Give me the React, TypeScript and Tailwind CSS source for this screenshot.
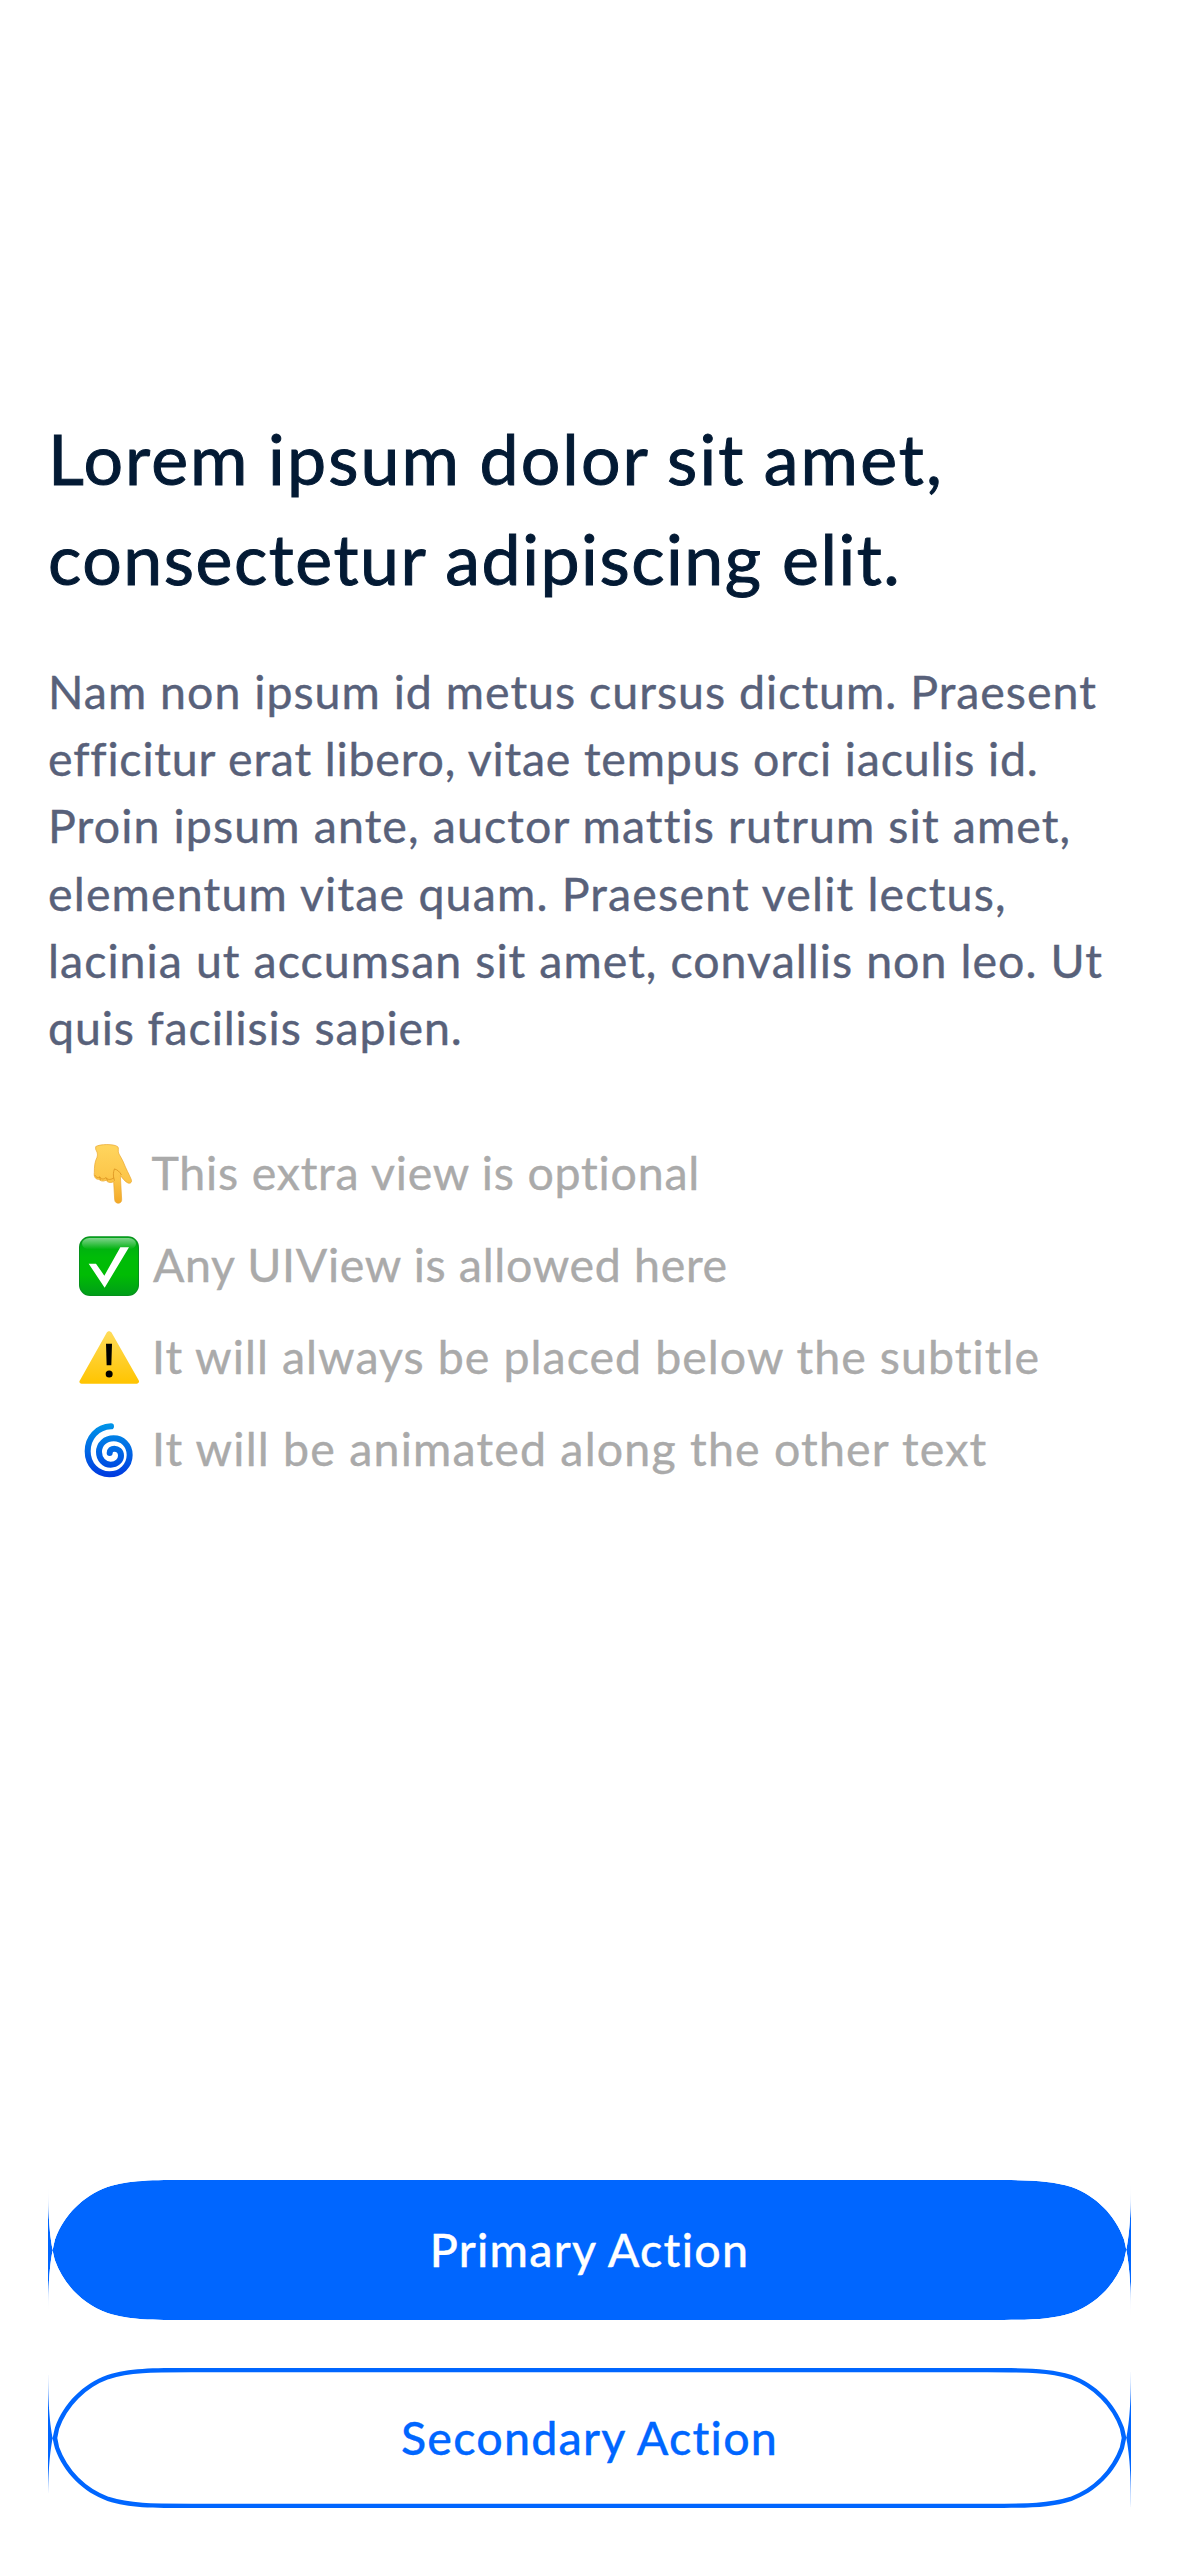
import React from 'react';

const titleLines = [
  { text: 'Lorem ipsum dolor sit amet,', cls: 'tracking-[2.1px] [word-spacing:-1.500px]' },
  { text: 'consectetur adipiscing elit.', cls: 'tracking-[1.54px]' },
];

const subtitleLines = [
  { text: 'Nam non ipsum id metus cursus dictum. Praesent', cls: 'tracking-[1px]' },
  { text: 'efficitur erat libero, vitae tempus orci iaculis id.', cls: 'tracking-[0.82px]' },
  { text: 'Proin ipsum ante, auctor mattis rutrum sit amet,', cls: 'tracking-[1.12px]' },
  { text: 'elementum vitae quam. Praesent velit lectus,', cls: 'tracking-[1.18px]' },
  { text: 'lacinia ut accumsan sit amet, convallis non leo. Ut', cls: 'tracking-[1.04px]' },
  { text: 'quis facilisis sapien.', cls: 'tracking-[0.88px]' },
];

function PointingHand() {
  return (
    <svg viewBox="57 71 180 180" className="size-[60px] shrink-0" role="img" aria-label="Pointing down">
      <defs>
        <linearGradient id="hand" x1="0" y1="0" x2="0" y2="1">
          <stop offset="0" stopColor="#FFD55E" />
          <stop offset="0.6" stopColor="#FCC548" />
          <stop offset="1" stopColor="#F3A827" />
        </linearGradient>
      </defs>
      <path
        d="M107 79 C118 71 162 70 173 79 C178 83 172 93 177 101 C181 110 187 116 190 125 C198 146 208 163 214 178 C217 187 209 191 202 187 C194 183 187 172 181 166 L185 237 C186 252 165 253 164 238 L161 184 C150 189 143 186 138 180 C128 185 120 181 117 177 C106 178 101 168 103 157 C103 139 104 124 111 111 C115 101 110 93 107 87 Z"
        fill="url(#hand)"
        stroke="#E9A52C"
        strokeWidth="2"
      />
      <path
        d="M105 165 C108 172 115 173 119 170 C123 178 132 177 138 172 C144 180 154 178 161 173 M139 173 L142 180 M119 170 L121 178 M163 180 C158 164 160 155 163 147 M164 146 C172 148 179 154 184 163"
        fill="none"
        stroke="#DC9420"
        strokeWidth="2.500"
        strokeLinecap="round"
      />
    </svg>
  );
}

function CheckBox() {
  return (
    <svg viewBox="57 347 180 180" className="size-[60px] shrink-0" role="img" aria-label="Check mark">
      <defs>
        <linearGradient id="box" x1="0" y1="0" x2="0" y2="1">
          <stop offset="0" stopColor="#00A818" />
          <stop offset="0.35" stopColor="#00BC08" />
          <stop offset="0.65" stopColor="#00BC04" />
          <stop offset="1" stopColor="#009E18" />
        </linearGradient>
        <linearGradient id="gloss" x1="0" y1="0" x2="0" y2="1">
          <stop offset="0" stopColor="#fff" stopOpacity="0.5" />
          <stop offset="1" stopColor="#fff" stopOpacity="0" />
        </linearGradient>
      </defs>
      <rect x="57" y="348" width="180" height="179" rx="33" fill="#06911C" />
      <rect x="60" y="351" width="174" height="173" rx="30" fill="url(#box)" />
      <rect x="66" y="353" width="162" height="34" rx="22" fill="url(#gloss)" />
      <path d="M86 430 H108 L133 466 L181 381 H207 L134 502 Z" fill="#fff" />
    </svg>
  );
}

function Warning() {
  return (
    <svg viewBox="57 623 180 180" className="size-[60px] shrink-0" role="img" aria-label="Warning">
      <defs>
        <linearGradient id="warn" x1="0" y1="0" x2="0" y2="1">
          <stop offset="0" stopColor="#FFDC5A" />
          <stop offset="1" stopColor="#FFC400" />
        </linearGradient>
      </defs>
      <path
        d="M140 637 C143 631 151 631 155 637 L236 780 C239 785 236 790 230 790 H65 C59 790 56 785 60 780 Z"
        fill="url(#warn)"
      />
      <path d="M138 670 H156 L154 735 H140 Z" fill="#000" />
      <circle cx="147.500" cy="761" r="10.500" fill="#000" />
    </svg>
  );
}

function Cyclone() {
  return (
    <svg viewBox="57 899 180 180" className="size-[60px] shrink-0" role="img" aria-label="Cyclone">
      <defs>
        <linearGradient id="cyc" gradientUnits="userSpaceOnUse" x1="0" y1="908" x2="0" y2="1072">
          <stop offset="0" stopColor="#0096E8" />
          <stop offset="0.5" stopColor="#0068E4" />
          <stop offset="1" stopColor="#0038E0" />
        </linearGradient>
      </defs>
      <path
        d="M153 918 C111 920 83 952 83 993 C83 1034 113 1062 148 1062 C184 1062 209 1035 209 1004 C209 974 187 954 161 954 C136 954 117 971 117 995 C117 1017 133 1033 152 1033 C171 1033 183 1020 183 1006 C183 992 173 985 163 985 C155 985 149 990 149 998"
        fill="none"
        stroke="url(#cyc)"
        strokeWidth="18"
        strokeLinecap="round"
      />
    </svg>
  );
}

const hints = [
  { icon: <PointingHand />, text: 'This extra view is optional', cls: 'ml-[12.500px] tracking-[0.79px]' },
  { icon: <CheckBox />, text: 'Any UIView is allowed here', cls: 'ml-[14px] tracking-[0.68px]' },
  { icon: <Warning />, text: 'It will always be placed below the subtitle', cls: 'ml-[13px] tracking-[1.05px]' },
  { icon: <Cyclone />, text: 'It will be animated along the other text', cls: 'ml-[13px] tracking-[1.2px]' },
];

// Continuous-corner outline whose corners overlap at the vertical middle.
const outline =
  'M143.700 0 H939.300 C980.700 0 1001.400 0 1023.600 7 C1048 15.900 1067.100 35 1076 59.400 C1081.500 81.600 1083 102.300 1083 143.700 V-3.700 C1083 37.700 1081.500 58.400 1076 80.600 C1067.100 105 1048 124.100 1023.600 133 C1001.400 140 980.700 140 939.300 140 H143.700 C102.300 140 81.600 140 59.400 133 C35 124.100 15.900 105 7 80.600 C1.500 58.400 0 37.700 0 -3.700 V143.700 C0 102.300 1.500 81.600 7 59.400 C15.900 35 35 15.900 59.400 7 C81.600 0 102.300 0 143.700 0 Z';

function ActionButton({ label, primary = false }: { label: string; primary?: boolean }) {
  return (
    <button type="button" className="relative flex h-[140px] w-full items-center justify-center">
      <svg viewBox="0 0 1083 140" className="absolute inset-0 h-full w-full" aria-hidden="true">
        <clipPath id="pill">
          <path d={outline} />
        </clipPath>
        <path
          d={outline}
          clipPath="url(#pill)"
          fill={primary ? '#0066FF' : 'none'}
          stroke={primary ? 'none' : '#0066FF'}
          strokeWidth="8.700"
        />
      </svg>
      <span
        className={
          primary
            ? 'relative text-[46.500px] font-medium tracking-[1.27px] text-white [-webkit-text-stroke:0.3px_#fff]'
            : 'relative text-[46.500px] font-medium tracking-[1.22px] text-[#0066FF] [-webkit-text-stroke:0.3px_#0066FF]'
        }
      >
        {label}
      </span>
    </button>
  );
}

export default function App() {
  return (
    <main className="flex h-[2556px] w-[1179px] flex-col overflow-hidden bg-white px-12 pt-[408px] pb-12 font-['Lato',sans-serif]">
      <h1 className="text-[69.800px] leading-[100px] text-[#031A34] [-webkit-text-stroke:1px_#031A34]">
        {titleLines.map((l) => (
          <span key={l.text} className={`block whitespace-nowrap ${l.cls}`}>
            {l.text}
          </span>
        ))}
      </h1>
      <p className="mt-[50px] text-[46.500px] leading-[67.200px] text-[#58617A] [-webkit-text-stroke:0.4px_#58617A]">
        {subtitleLines.map((l) => (
          <span key={l.text} className={`block whitespace-nowrap ${l.cls}`}>
            {l.text}
          </span>
        ))}
      </p>
      <ul className="mt-[66.500px] pl-[31px] text-[46.500px] leading-[92px] text-[#AAAAAA] [-webkit-text-stroke:0.4px_#AAAAAA]">
        {hints.map((h) => (
          <li key={h.text} className="flex h-[92px] items-center">
            {h.icon}
            <span className={`-mt-[3px] whitespace-nowrap ${h.cls}`}>{h.text}</span>
          </li>
        ))}
      </ul>
      <div className="mt-auto flex flex-col gap-12">
        <ActionButton label="Primary Action" primary />
        <ActionButton label="Secondary Action" />
      </div>
    </main>
  );
}
